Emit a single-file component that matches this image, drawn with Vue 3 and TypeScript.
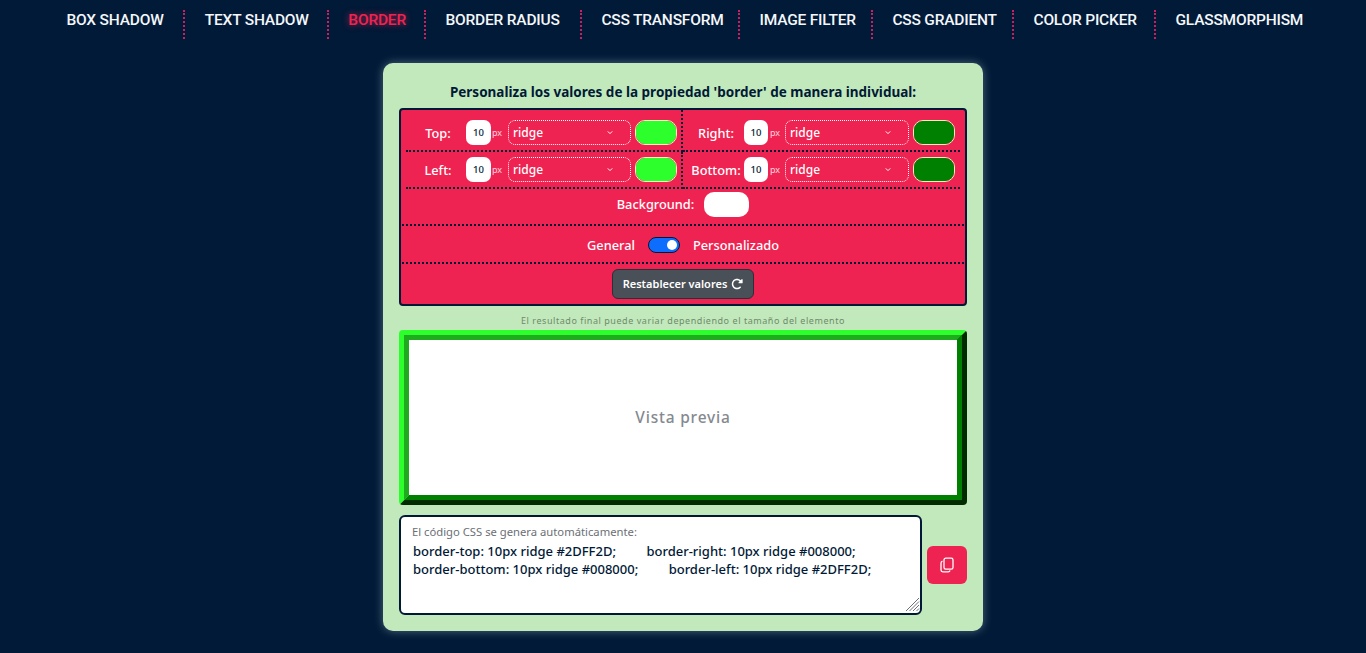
<script setup lang="ts">
import { computed, reactive, ref } from 'vue'

interface Side { key: string; label: string; width: number; style: string; color: string }

const navItems = ['BOX SHADOW', 'TEXT SHADOW', 'BORDER', 'BORDER RADIUS', 'CSS TRANSFORM', 'IMAGE FILTER', 'CSS GRADIENT', 'COLOR PICKER', 'GLASSMORPHISM']
const styles = ['ridge', 'solid', 'dotted', 'dashed', 'double', 'groove', 'inset', 'outset']
const sides = reactive<Side[]>([
  { key: 'top', label: 'Top:', width: 10, style: 'ridge', color: '#2dff2d' },
  { key: 'right', label: 'Right:', width: 10, style: 'ridge', color: '#008000' },
  { key: 'left', label: 'Left:', width: 10, style: 'ridge', color: '#2dff2d' },
  { key: 'bottom', label: 'Bottom:', width: 10, style: 'ridge', color: '#008000' },
])
const background = ref('#ffffff')
const custom = ref(true)

const bySide = (k: string) => sides.find((s) => s.key === k) as Side
const decl = (k: string) => {
  const s = bySide(k)
  return `border-${k}: ${s.width}px ${s.style} ${s.color.toUpperCase()};`
}
const previewStyle = computed(() => {
  const o: Record<string, string> = { background: background.value }
  for (const s of sides) o[`border-${s.key}`] = `${s.width}px ${s.style} ${s.color}`
  return o
})
const code = computed(() => `${decl('top')}         ${decl('right')}\n${decl('bottom')}         ${decl('left')}`)
</script>

<template>
  <div class="page">
    <nav class="nav">
      <a v-for="(item, i) in navItems" :key="item" class="nav-item" :class="{ active: i === 2 }">{{ item }}</a>
    </nav>
    <main class="card">
      <h1 class="title">Personaliza los valores de la propiedad 'border' de manera individual:</h1>
      <section class="panel">
        <div class="sides">
          <div v-for="s in sides" :key="s.key" class="side" :class="'side-' + s.key">
            <label class="side-label">{{ s.label }}</label>
            <input v-model.number="s.width" class="num" type="number" />
            <span class="px">px</span>
            <div class="select-wrap">
              <select v-model="s.style" class="select">
                <option v-for="o in styles" :key="o">{{ o }}</option>
              </select>
              <svg class="chev" viewBox="0 0 8 6" width="6" height="5"><path d="M1 1.5 4 4.5 7 1.5" fill="none" stroke="#fff" stroke-width="1.3" /></svg>
            </div>
            <input v-model="s.color" class="color" type="color" />
          </div>
        </div>
        <div class="row bg-row">
          <label class="row-label">Background:</label>
          <input v-model="background" class="color color-bg" type="color" />
        </div>
        <div class="row mode-row">
          <span class="row-label">General</span>
          <button class="switch" type="button" @click="custom = !custom"><span class="knob" /></button>
          <span class="row-label">Personalizado</span>
        </div>
        <div class="row reset-row">
          <button class="reset" type="button">
            Restablecer valores
            <svg viewBox="0 0 512 512" width="12" height="12"><path fill="#fff" d="M463.5 224H472c13.3 0 24-10.700 24-24V72c0-9.700-5.800-18.500-14.800-22.200s-19.300-1.700-26.200 5.200L413.400 96.600c-87.600-86.500-228.700-86.200-315.800 1c-87.500 87.500-87.500 229.300 0 316.800s229.300 87.500 316.800 0c12.500-12.500 12.500-32.800 0-45.300s-32.800-12.500-45.300 0c-62.500 62.500-163.800 62.500-226.300 0s-62.500-163.800 0-226.300c62.200-62.200 162.700-62.500 225.300-1L327 183c-6.900 6.900-8.900 17.200-5.200 26.200s12.500 14.800 22.200 14.800H463.500z"/></svg>
          </button>
        </div>
      </section>
      <p class="note">El resultado final puede variar dependiendo el tamaño del elemento</p>
      <div class="preview" :style="previewStyle">Vista previa</div>
      <div class="output">
        <div class="code-box">
          <span class="code-label">El código CSS se genera automáticamente:</span>
          <textarea class="code" readonly :value="code" spellcheck="false"></textarea>
          <svg class="grip" viewBox="0 0 15 15" width="15" height="15" stroke="#6b7078" stroke-width="1">
            <path d="M1 14 14 1M4.500 14 14 4.500M8 14 14 8M11.500 14 14 11.500" />
          </svg>
        </div>
        <button class="copy" type="button" aria-label="Copiar">
          <svg viewBox="0 0 16 16" width="16" height="16" fill="none" stroke="#fff" stroke-width="1.3" stroke-linejoin="round">
            <rect x="5" y="1.2" width="9" height="11" rx="1.800" />
            <path d="M3.500 4.200C2.500 4.500 2 5.200 2 6.200v6.800c0 1 .8 1.800 1.800 1.800h5.400c1 0 1.600-.5 1.900-1.300" />
          </svg>
        </button>
      </div>
    </main>
  </div>
</template>

<style>
html, body { margin: 0; background: #011a37; }
</style>

<style scoped>
.page {
  min-height: 653px;
  box-sizing: border-box;
  background: #011a37;
  font-family: "Noto Sans", sans-serif;
  padding-top: 10px;
}
.nav {
  display: grid;
  grid-template-columns: 138.4px 143.5px 97.2px 155.9px 158.1px 132.9px 141.1px 142px 163.3px;
  justify-content: center;
  height: 29px;
  margin-bottom: 24px;
}
.nav-item {
  display: flex;
  align-items: center;
  padding: 0 0 9px 19.6px;
  color: #f4f7fb;
  font-family: Roboto, sans-serif;
  font-size: 15.5px;
  font-weight: 500;
  letter-spacing: -0.2px;
  border-right: 2px dotted #c9205f;
  white-space: nowrap;
}
.nav-item:last-child { border-right: 0; }
.nav-item.active { color: #ef2351; text-shadow: 0 0 6px rgba(239, 35, 81, .7); }
.card {
  width: 600px;
  height: 568px;
  box-sizing: border-box;
  margin: 0 auto;
  padding: 16px;
  background: #c2e9bb;
  border-radius: 10px;
  box-shadow: 0 0 10px rgba(200, 225, 235, .4);
}
.title { margin: 3px 0 6px; height: 20px; line-height: 20px; font-size: 13.5px; font-weight: 700; text-align: center; color: #011936; }
.panel {
  box-sizing: border-box;
  height: 198px;
  background: #ef2351;
  border: 2px solid #011936;
  border-radius: 4px;
  padding: 0 5px;
  color: #fff;
  display: flex;
  flex-direction: column;
}
.sides { display: grid; grid-template-columns: 277px 277px; }
.side { display: flex; align-items: center; height: 37px; padding: 5px 0; box-sizing: border-box; border-bottom: 2px dotted #011936; }
.side-top, .side-right { height: 42px; padding-top: 10px; }
.side-top, .side-left { border-right: 2px dotted #011936; }
.side-right, .side-bottom { padding-left: 5px; }
.side-label { width: 60px; flex: none; padding-left: 4px; box-sizing: border-box; text-align: center; font-size: 12.8px; font-weight: 500; }
.side-right .side-label, .side-bottom .side-label { width: 56px; padding-left: 0; }
.num {
  width: 25px; height: 25px; box-sizing: border-box; padding: 0; border: 0; border-radius: 7px; flex: none;
  background: #fff; color: #011936; text-align: center; font: 500 9.5px "Noto Sans", sans-serif; outline: none;
  appearance: textfield; -moz-appearance: textfield;
}
.side-right .num, .side-bottom .num { width: 24px; }
.num::-webkit-inner-spin-button, .num::-webkit-outer-spin-button { -webkit-appearance: none; margin: 0; }
.px { width: 17px; flex: none; padding-left: 1px; box-sizing: border-box; font-size: 9px; opacity: .8; }
.side-right .px, .side-bottom .px { padding-left: 2px; }
.select-wrap { position: relative; width: 123px; height: 25px; flex: none; }
.side-right .select-wrap, .side-bottom .select-wrap { width: 124px; }
.select {
  width: 100%; height: 100%; box-sizing: border-box; appearance: none; -webkit-appearance: none;
  background: transparent; color: #fff; border: 1px dotted #fff; border-radius: 7px; padding: 0 4px;
  font: 500 12px "Noto Sans", sans-serif; outline: none;
}
.select option { color: #011936; }
.chev { position: absolute; right: 18px; top: 10px; pointer-events: none; }
.color {
  width: 42px; height: 25px; box-sizing: border-box; margin: 0 0 0 4px; padding: 0; flex: none;
  border: 1px solid #e8f0c0; border-radius: 10px; overflow: hidden; appearance: none; -webkit-appearance: none; background: none;
}
.color::-webkit-color-swatch-wrapper { padding: 0; }
.color::-webkit-color-swatch { border: 0; border-radius: 0; }
.row { display: flex; align-items: center; justify-content: center; box-sizing: border-box; border-bottom: 2px dotted #011936; margin: 0 -4px; }
.bg-row { height: 37px; gap: 10px; padding-bottom: 4px; }
.bg-row .row-label { padding-bottom: 2px; }
.bg-row .color-bg { width: 45px; margin: 0; border: 0; border-radius: 10px; }
.mode-row { height: 38px; padding-top: 2px; }
.row-label { font-size: 12.8px; font-weight: 500; }
.switch {
  width: 32px; height: 16px; margin: 0 13px; padding: 0; position: relative; box-sizing: border-box;
  background: #0d6efd; border: 1px solid #011936; border-radius: 8px;
}
.knob { position: absolute; right: 2px; top: 2px; width: 10px; height: 10px; border-radius: 50%; background: #fff; }
.reset-row { flex: 1; border-bottom: 0; }
.reset {
  width: 142px; height: 30px; display: flex; align-items: center; justify-content: center; gap: 4px;
  background: #495057; color: #fff; border: 1px solid #2c2f3a; border-radius: 6px;
  font: 600 11px "Noto Sans", sans-serif; padding: 0 0 1px;
}
.note { margin: 8px 0 3px; height: 13px; line-height: 13px; text-align: center; font-size: 9px; letter-spacing: .55px; color: #6d8b6c; }
.preview {
  height: 175px; box-sizing: border-box; display: flex; align-items: center; justify-content: center; border-radius: 4px;
  color: #84898f; font-size: 15.5px; font-weight: 500; letter-spacing: .8px; padding-bottom: 2px;
}
.output { display: flex; align-items: center; gap: 5px; margin-top: 10px; }
.code-box { position: relative; width: 523px; height: 100px; }
.code-label { position: absolute; left: 13px; top: 9px; font-size: 11.25px; color: #6b6f75; }
.code {
  display: block; width: 100%; height: 100%; box-sizing: border-box; padding: 25px 12px 0;
  background: #fff; color: #011936; border: 2px solid #011936; border-radius: 6px; outline: none;
  font: 500 13px/18px "Noto Sans", sans-serif; white-space: pre; overflow: hidden; resize: none;
}
.grip { position: absolute; right: 2px; bottom: 3px; pointer-events: none; }
.copy {
  width: 40px; height: 38px; padding: 0; display: flex; align-items: center; justify-content: center;
  background: #ef2351; border: 0; border-radius: 6px;
}
</style>
